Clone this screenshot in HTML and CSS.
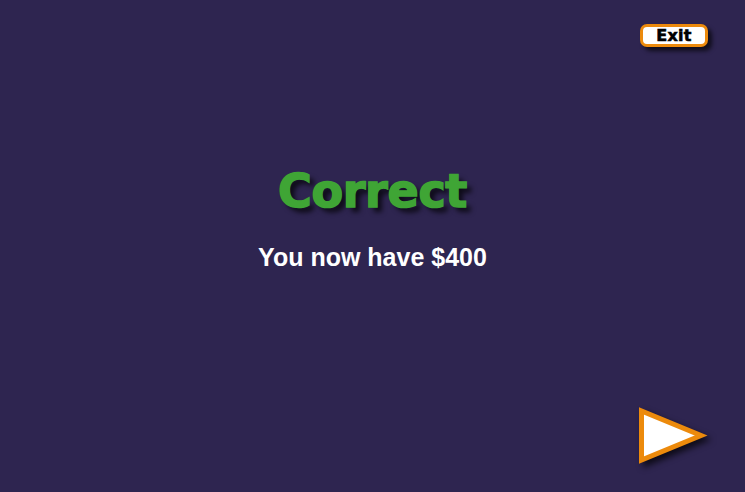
FILE: index.html
```html
<!DOCTYPE html>
<html lang="en">
<head>
<meta charset="utf-8">
<title>Correct</title>
<link rel="stylesheet" href="styles.css">
</head>
<body>
<div class="screen">
  <header class="topbar">
    <button class="exit-btn" type="button">Exit</button>
  </header>
  <main class="result">
    <h1 class="result-title">Correct</h1>
    <p class="result-text">You now have $400</p>
  </main>
  <footer class="bottombar">
    <button class="next-btn" type="button" aria-label="Next">
      <svg class="next-icon" width="76" height="64" viewBox="0 0 76 64">
        <polygon points="5.5,7 5.5,56 65,31.5" fill="#ffffff" stroke="#ec8a0c" stroke-width="5" stroke-linejoin="miter"/>
      </svg>
    </button>
  </footer>
</div>
</body>
</html>
```
FILE: styles.css
```css
html, body {
  margin: 0;
  padding: 0;
}
body {
  background: #2e2550;
  font-family: "Liberation Sans", Arial, sans-serif;
}
.screen {
  width: 745px;
  height: 492px;
  display: flex;
  flex-direction: column;
  overflow: hidden;
}
.topbar {
  display: flex;
  justify-content: flex-end;
  padding: 24px 37px 0 0;
}
.exit-btn {
  width: 68px;
  height: 23px;
  box-sizing: border-box;
  border: 3px solid #ec8a0c;
  border-radius: 7px;
  background: #ffffff;
  color: #000000;
  font-family: "DejaVu Sans", sans-serif;
  font-weight: bold;
  font-size: 16px;
  line-height: 16px;
  letter-spacing: 0.3px;
  -webkit-text-stroke: 0.6px #000000;
  padding: 0;
  box-shadow: 4px 4px 4px rgba(0, 0, 0, 0.65);
  cursor: pointer;
}
.result {
  flex: 1;
  display: flex;
  flex-direction: column;
  align-items: center;
}
.result-title {
  margin: 121px 0 0 0;
  font-family: "DejaVu Sans", sans-serif;
  font-weight: bold;
  font-size: 46px;
  line-height: 46px;
  letter-spacing: -0.3px;
  color: #3fa535;
  -webkit-text-stroke: 1.6px #3fa535;
  text-shadow: 5px 5px 5px rgba(0, 0, 0, 0.7);
}
.result-text {
  margin: 31px 0 0 0;
  font-family: "Liberation Sans", Arial, sans-serif;
  font-weight: bold;
  font-size: 25px;
  line-height: 25px;
  color: #ffffff;
}
.bottombar {
  display: flex;
  justify-content: flex-end;
  padding: 0 33px 24px 0;
}
.next-btn {
  border: 0;
  padding: 0;
  background: transparent;
  display: block;
  cursor: pointer;
}
.next-icon {
  display: block;
  filter: drop-shadow(4px 4px 3px rgba(0, 0, 0, 0.7));
}
```
